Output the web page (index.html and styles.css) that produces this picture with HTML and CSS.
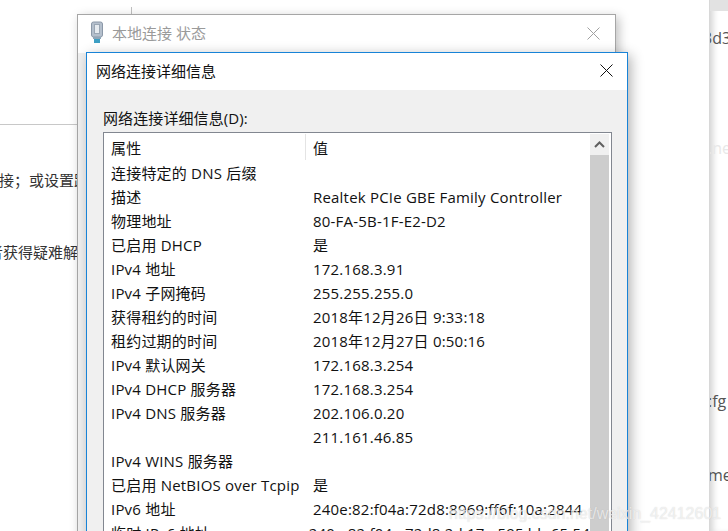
FILE: index.html
```html
<!DOCTYPE html>
<html lang="zh-CN">
  <head>
    <meta charset="UTF-8" />
    <title>网络连接详细信息</title>
    <link rel="stylesheet" href="styles.css">
  </head>
  <body>
    <div class="desktop">
      <!-- page behind the dialogs -->
      <div class="page-rule"></div>
      <div class="page-tick"></div>
      <p class="page-text line-one">接；或设置路由</p>
      <p class="page-text line-two">者获得疑难解答</p>

      <div class="side-panel">
        <div class="side-top"></div>
        <span class="side-text s1">3d3</span>
        <span class="side-text s2">.ne</span>
        <span class="side-text s3">:fg</span>
        <span class="side-text s4">me</span>
      </div>

      <!-- status window, inactive -->
      <div class="window back-window">
        <div class="back-title">
          <svg class="net-icon" width="14" height="22" viewBox="0 0 14 22">
            <rect x="1.5" y="1" width="11" height="15" rx="2" fill="#b4bfcc" stroke="#8b98a8"/>
            <rect x="4.5" y="3.5" width="5" height="9" fill="#e6ebf0" stroke="#9aa6b4"/>
            <rect x="3" y="16" width="8" height="2" fill="#8fa6b8"/>
            <rect x="4" y="18" width="6" height="4" fill="#3d9fc4"/>
          </svg>
          <span>本地连接 状态</span>
        </div>
        <svg class="close back-close" width="13" height="13" viewBox="0 0 13 13">
          <path d="M0.5 0.5L12.5 12.5M12.5 0.5L0.5 12.5" stroke="#a0a0a0" fill="none"/>
        </svg>
      </div>

      <!-- details dialog -->
      <div class="window front-window">
        <div class="front-title">
          <span>网络连接详细信息</span>
          <svg class="close" width="13" height="13" viewBox="0 0 13 13">
            <path d="M0.5 0.5L12.5 12.5M12.5 0.5L0.5 12.5" stroke="#111" fill="none"/>
          </svg>
        </div>
        <div class="front-body">
          <div class="list-label">网络连接详细信息(D):</div>
          <div class="list-box">
            <div class="list-rows">
              <div class="row head"><span class="prop">属性</span><span class="val">值</span></div>
              <div class="row"><span class="prop">连接特定的 DNS 后缀</span><span class="val"></span></div>
              <div class="row"><span class="prop">描述</span><span class="val">Realtek PCIe GBE Family Controller</span></div>
              <div class="row"><span class="prop">物理地址</span><span class="val">80-FA-5B-1F-E2-D2</span></div>
              <div class="row"><span class="prop">已启用 DHCP</span><span class="val">是</span></div>
              <div class="row"><span class="prop">IPv4 地址</span><span class="val">172.168.3.91</span></div>
              <div class="row"><span class="prop">IPv4 子网掩码</span><span class="val">255.255.255.0</span></div>
              <div class="row"><span class="prop">获得租约的时间</span><span class="val">2018年12月26日 9:33:18</span></div>
              <div class="row"><span class="prop">租约过期的时间</span><span class="val">2018年12月27日 0:50:16</span></div>
              <div class="row"><span class="prop">IPv4 默认网关</span><span class="val">172.168.3.254</span></div>
              <div class="row"><span class="prop">IPv4 DHCP 服务器</span><span class="val">172.168.3.254</span></div>
              <div class="row"><span class="prop">IPv4 DNS 服务器</span><span class="val">202.106.0.20</span></div>
              <div class="row"><span class="prop"></span><span class="val">211.161.46.85</span></div>
              <div class="row"><span class="prop">IPv4 WINS 服务器</span><span class="val"></span></div>
              <div class="row"><span class="prop">已启用 NetBIOS over Tcpip</span><span class="val">是</span></div>
              <div class="row"><span class="prop">IPv6 地址</span><span class="val">240e:82:f04a:72d8:8969:ff6f:10a:2844</span></div>
              <div class="row"><span class="prop">临时 IPv6 地址</span><span class="val">240e:82:f04a:72d8:2d:17e:595:bb:65:54</span></div>
            </div>
            <div class="scrollbar">
              <div class="scroll-btn">
                <svg width="11" height="7" viewBox="0 0 11 7">
                  <path d="M1 6L5.5 1.5L10 6" stroke="#606060" stroke-width="2" fill="none"/>
                </svg>
              </div>
            </div>
          </div>
        </div>
      </div>

      <div class="watermark">https://blog.csdn.net/weixin_42412601</div>
    </div>
  </body>
</html>
```

FILE: styles.css
```css
html,
body {
  margin: 0;
  height: 100%;
  overflow: hidden;
}
body {
  font-family: "Open Sans", "Noto Sans CJK SC", sans-serif;
  background-color: #fff;
  color: #111;
}
.desktop {
  position: relative;
  width: 728px;
  height: 531px;
  overflow: hidden;
  background-color: #fff;
}

.page-rule {
  position: absolute;
  left: 0;
  top: 124px;
  width: 78px;
  height: 1px;
  background-color: #c8c8c8;
}
.page-tick {
  position: absolute;
  left: 131px;
  top: 7px;
  width: 1px;
  height: 8px;
  background-color: #c0c0c0;
}
.page-text {
  position: absolute;
  margin: 0;
  font-size: 15px;
  line-height: 20px;
  white-space: nowrap;
  color: #333;
}
.line-one {
  left: -1px;
  top: 170px;
}
.line-two {
  left: -12px;
  top: 242px;
}

.side-panel {
  position: absolute;
  left: 709px;
  top: 0;
  width: 19px;
  height: 531px;
  background-color: #fff;
  border-left: 1px solid #d8d8d8;
  box-shadow: inset 6px 0 6px -3px #d4d4d4;
  overflow: hidden;
}
.side-top {
  height: 11px;
  background-color: #e2e2e2;
}
.side-text {
  position: absolute;
  left: -2px;
  font-size: 16px;
  line-height: 20px;
  color: #555;
  white-space: nowrap;
}
.s1 {
  left: -7px;
  top: 28px;
}
.s2 {
  top: 138px;
  color: #e8e8e8;
}
.s3 {
  top: 391px;
}
.s4 {
  top: 465px;
}

.window {
  position: absolute;
  box-sizing: border-box;
}
.back-window {
  left: 77px;
  top: 14px;
  width: 539px;
  height: 560px;
  background-color: #f0f0f0;
  border: 1px solid #a6a6a6;
  box-shadow: 3px 3px 10px rgba(0, 0, 0, 0.25);
}
.back-title {
  display: flex;
  align-items: center;
  gap: 8px;
  box-sizing: border-box;
  height: 38px;
  padding: 0 0 4px 12px;
  background-color: #fff;
  color: #9a9a9a;
  font-size: 15px;
}
.back-close {
  position: absolute;
  right: 15px;
  top: 12px;
}
.front-window {
  left: 86px;
  top: 52px;
  width: 542px;
  height: 520px;
  background-color: #f0f0f0;
  border: 1px solid #1883d7;
  box-shadow: 3px 3px 12px rgba(0, 0, 0, 0.3);
}
.front-title {
  display: flex;
  align-items: center;
  justify-content: space-between;
  box-sizing: border-box;
  height: 37px;
  padding: 0 14px 3px 9px;
  background-color: #fff;
  font-size: 15px;
}
.front-body {
  padding: 16px 15px 0 16px;
}
.list-label {
  height: 26px;
  font-size: 15px;
  letter-spacing: 0.1px;
  line-height: 24px;
}
.list-box {
  display: flex;
  box-sizing: border-box;
  width: 509px;
  height: 460px;
  background-color: #fff;
  border: 1px solid #828790;
}
.list-rows {
  flex: 1;
  min-width: 0;
  overflow: hidden;
  padding-top: 1px;
}
.row {
  display: flex;
  height: 24px;
  font-size: 15px;
  letter-spacing: 0.2px;
  line-height: 24px;
  white-space: nowrap;
}
.row.head {
  height: 26px;
  line-height: 28px;
  margin-bottom: 1px;
}
.prop {
  box-sizing: border-box;
  width: 202px;
  padding-left: 7px;
}
.head .prop {
  border-right: 1px solid #e4e4e4;
}
.val {
  padding-left: 7px;
}
.scrollbar {
  width: 19px;
  margin: 1px 2px 0 0;
  background-color: #cdcdcd;
  flex-shrink: 0;
}
.scroll-btn {
  display: flex;
  align-items: center;
  justify-content: center;
  height: 21px;
  background-color: #f0f0f0;
}

.watermark {
  position: absolute;
  left: 449px;
  top: 504px;
  font-family: "Liberation Sans", sans-serif;
  font-size: 16px;
  line-height: 20px;
  color: rgba(255, 255, 255, 0.65);
  text-shadow: 0 0 1px rgba(150, 150, 150, 0.45);
  white-space: nowrap;
}
```
